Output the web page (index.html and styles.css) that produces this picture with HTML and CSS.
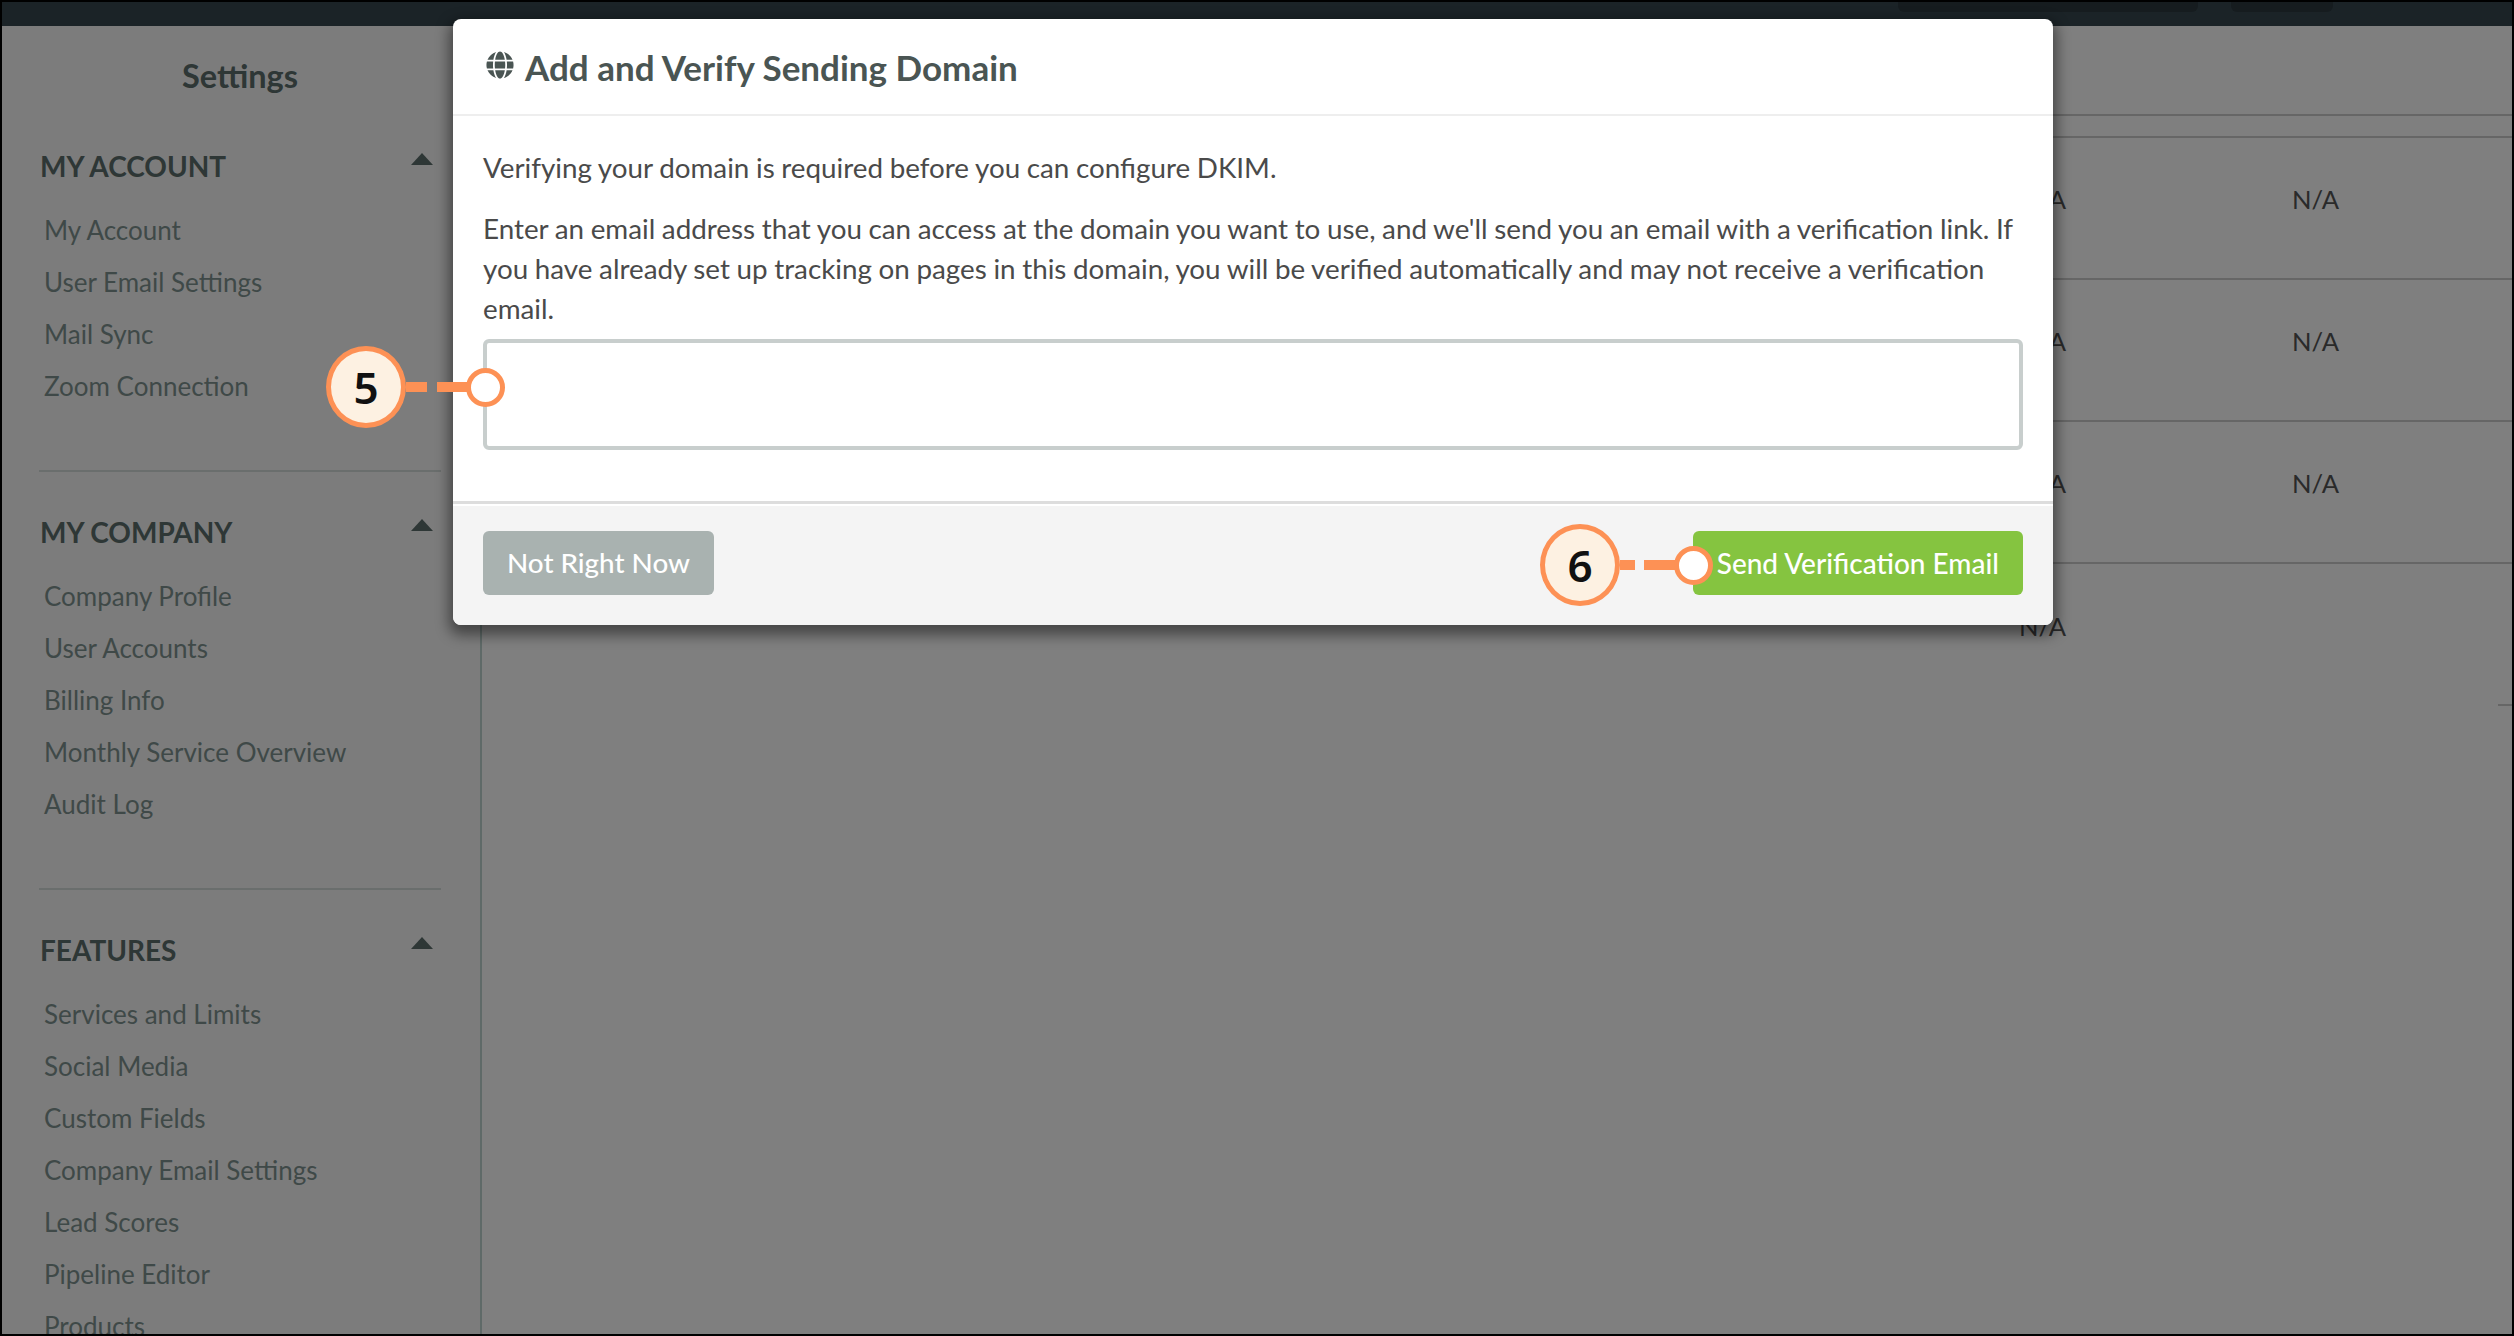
FILE: index.html
```html
<!DOCTYPE html>
<html lang="en">
<head>
    <meta charset="UTF-8">
    <title>Add and Verify Sending Domain</title>
    <link rel="stylesheet" href="styles.css">
</head>
<body>
    <div class="frame">
        <div class="topbar">
            <div class="topbar-tab topbar-tab-wide"></div>
            <div class="topbar-tab topbar-tab-small"></div>
        </div>

        <div class="page">
            <aside class="sidebar">
                <h2 class="sidebar-title">Settings</h2>

                <section class="side-section">
                    <div class="side-head"><span>MY ACCOUNT</span><i class="caret"></i></div>
                    <a class="side-link">My Account</a>
                    <a class="side-link">User Email Settings</a>
                    <a class="side-link">Mail Sync</a>
                    <a class="side-link">Zoom Connection</a>
                </section>

                <section class="side-section">
                    <div class="side-head"><span>MY COMPANY</span><i class="caret"></i></div>
                    <a class="side-link">Company Profile</a>
                    <a class="side-link">User Accounts</a>
                    <a class="side-link">Billing Info</a>
                    <a class="side-link">Monthly Service Overview</a>
                    <a class="side-link">Audit Log</a>
                </section>

                <section class="side-section">
                    <div class="side-head"><span>FEATURES</span><i class="caret"></i></div>
                    <a class="side-link">Services and Limits</a>
                    <a class="side-link">Social Media</a>
                    <a class="side-link">Custom Fields</a>
                    <a class="side-link">Company Email Settings</a>
                    <a class="side-link">Lead Scores</a>
                    <a class="side-link">Pipeline Editor</a>
                    <a class="side-link">Products</a>
                </section>
            </aside>

            <main class="content">
                <div class="row row-head"></div>
                <div class="row row-sub"></div>
                <div class="row"><span>N/A</span><span>N/A</span></div>
                <div class="row"><span>N/A</span><span>N/A</span></div>
                <div class="row"><span>N/A</span><span>N/A</span></div>
                <div class="row row-last"><span>N/A</span></div>
            </main>
        </div>

        <div class="backdrop"></div>

        <div class="modal">
            <div class="modal-header">
                <svg class="globe" viewBox="0 0 496 512"><path fill="currentColor" d="M336.5 160C322 70.7 287.8 8 248 8s-74 62.7-88.5 152h177zM152 256c0 22.2 1.2 43.5 3.3 64h185.3c2.1-20.5 3.3-41.8 3.3-64s-1.2-43.5-3.3-64H155.3c-2.1 20.5-3.3 41.8-3.3 64zm324.7-96c-28.6-67.9-86.5-120.4-158-141.6 24.4 33.8 41.2 84.7 50 141.6h108zM177.2 18.4C105.8 39.6 47.8 92.1 19.3 160h108c8.7-56.9 25.5-107.8 49.9-141.6zM487.4 192H372.7c2.1 21 3.3 42.5 3.3 64s-1.2 43-3.3 64h114.6c5.5-20.5 8.6-41.8 8.6-64s-3.1-43.5-8.5-64zM120 256c0-21.5 1.2-43 3.3-64H8.6C3.2 212.5 0 233.8 0 256s3.2 43.5 8.6 64h114.6c-2-21-3.2-42.5-3.2-64zm39.5 96c14.5 89.3 48.7 152 88.5 152s74-62.7 88.5-152h-177zm159.3 141.6c71.4-21.2 129.4-73.7 158-141.6h-108c-8.8 56.9-25.6 107.8-50 141.6zM19.3 352c28.6 67.9 86.5 120.4 158 141.6-24.4-33.8-41.2-84.7-50-141.6h-108z"/></svg>
                <h1 class="modal-title">Add and Verify Sending Domain</h1>
            </div>
            <div class="modal-body">
                <p class="modal-text">Verifying your domain is required before you can configure DKIM.</p>
                <p class="modal-text">Enter an email address that you can access at the domain you want to use, and we'll send you an email with a verification link. If you have already set up tracking on pages in this domain, you will be verified automatically and may not receive a verification email.</p>
                <input class="modal-input" type="text">
            </div>
            <div class="modal-footer">
                <button class="btn btn-muted">Not Right Now</button>
                <button class="btn btn-green">Send Verification Email</button>
            </div>
        </div>

        <div class="callout callout-five">
            <div class="callout-num">5</div>
            <div class="callout-dash callout-dash-a"></div>
            <div class="callout-dash callout-dash-b"></div>
            <div class="callout-dot"></div>
        </div>

        <div class="callout callout-six">
            <div class="callout-num">6</div>
            <div class="callout-dash callout-dash-c"></div>
            <div class="callout-dash callout-dash-d"></div>
            <div class="callout-dot"></div>
        </div>
    </div>
</body>
</html>
```

FILE: styles.css
```css
* {
    margin: 0;
    padding: 0;
    box-sizing: border-box;
}

body {
    font-family: Lato, "Open Sans", sans-serif;
    background: #000;
}

.frame {
    position: relative;
    width: 2514px;
    height: 1336px;
    border: 2px solid #000;
    background: #fff;
    overflow: hidden;
    display: flex;
    flex-direction: column;
}

.topbar {
    height: 24px;
    flex: none;
    background: #36464e;
    display: flex;
    gap: 33px;
    padding-left: 1896px;
}

.topbar-tab {
    height: 10px;
    background: #2c393f;
    border-radius: 0 0 6px 6px;
}

.topbar-tab-wide {
    width: 300px;
}

.topbar-tab-small {
    width: 102px;
}

.page {
    flex: 1;
    display: flex;
    min-height: 0;
}

/* sidebar */
.sidebar {
    width: 480px;
    flex: none;
    background: #f9f9f9;
    border-right: 2px solid #bed4d0;
    padding: 20px 39px 0 37px;
    overflow: hidden;
}

.sidebar-title {
    font-size: 32.5px;
    font-weight: 700;
    line-height: 60px;
    text-align: center;
    color: #5c6e6c;
    margin-bottom: 40px;
}

.side-section {
    display: flex;
    flex-direction: column;
    padding-bottom: 58px;
    margin-bottom: 40px;
    border-bottom: 2px solid #d5dcdb;
}

.side-head {
    display: flex;
    align-items: center;
    justify-content: space-between;
    height: 40px;
    margin-bottom: 18px;
    padding: 0 8px 0 1px;
    font-size: 28px;
    font-weight: 700;
    color: #5c6e6c;
}

.caret {
    width: 0;
    height: 0;
    margin-top: -14px;
    border-left: 11px solid transparent;
    border-right: 11px solid transparent;
    border-bottom: 12px solid #5c6e6c;
}

.side-link {
    display: block;
    height: 52px;
    line-height: 52px;
    padding-left: 5px;
    font-size: 26px;
    color: #7f9390;
    white-space: nowrap;
}

/* table behind the dialog */
.content {
    flex: 1;
    display: flex;
    flex-direction: column;
    min-width: 0;
}

.row {
    height: 142px;
    flex: none;
    display: grid;
    grid-template-columns: 1537px 273px;
    align-items: center;
    padding-bottom: 18px;
    border-bottom: 2px solid #ccc;
    font-size: 25.6px;
    color: #555;
}

.row span:nth-child(1) {
    grid-column: 2;
}

.row span:nth-child(2) {
    grid-column: 3;
}

.row-head {
    height: 90px;
}

.row-sub {
    height: 22px;
    padding-bottom: 0;
}

.row-last {
    border-bottom: none;
    position: relative;
}

.row-last::after {
    content: "";
    position: absolute;
    right: 0;
    bottom: 0;
    width: 14px;
    height: 2px;
    background: #ccc;
}

.backdrop {
    position: absolute;
    inset: 0;
    background: rgba(0, 0, 0, 0.5);
}

/* dialog */
.modal {
    position: absolute;
    left: 451px;
    top: 17px;
    width: 1600px;
    background: #fff;
    border-radius: 8px;
    box-shadow: 0 6px 14px 4px rgba(0, 0, 0, 0.45);
    overflow: hidden;
}

.modal-header {
    height: 97px;
    display: flex;
    align-items: center;
    gap: 11px;
    padding: 0 30px 0 33px;
    border-bottom: 2px solid #eee;
    color: #4a5553;
}

.globe {
    width: 28px;
    height: 28px;
    margin-top: -3px;
}

.modal-title {
    font-size: 35px;
    font-weight: 700;
}

.modal-body {
    padding: 32px 30px 51px;
}

.modal-text {
    font-size: 27.8px;
    line-height: 40px;
    word-spacing: -0.5px;
    color: #4a4a4a;
    margin-bottom: 21px;
}

.modal-text + .modal-text {
    margin-bottom: 18px;
}

.modal-input {
    display: block;
    width: 100%;
    height: 111px;
    margin-top: -8px;
    background: #fff;
    border: 4px solid #c8cecd;
    border-radius: 6px;
}

.modal-footer {
    height: 124px;
    display: flex;
    align-items: center;
    justify-content: space-between;
    padding: 0 30px 4px;
    background: #f4f4f4;
    border-top: 3px solid #ddd;
    box-shadow: inset 0 2px 0 #fff;
}

.btn {
    height: 64px;
    padding: 0 24px;
    border: none;
    border-radius: 6px;
    font-family: inherit;
    font-size: 27.8px;
    font-weight: 500;
    color: #fff;
}

.btn-muted {
    background: #a9b2b0;
}

.btn-green {
    background: #85c440;
    font-size: 28px;
}

/* numbered annotations on top of the shot */
.callout {
    position: absolute;
    display: flex;
    align-items: center;
}

.callout-five {
    left: 324px;
    top: 344px;
    height: 82px;
}

.callout-six {
    left: 1538px;
    top: 522px;
    height: 82px;
}

.callout-num {
    width: 80px;
    height: 82px;
    flex: none;
    display: flex;
    align-items: center;
    justify-content: center;
    border: 5px solid #fd9155;
    border-radius: 50%;
    background: #fdf1e2;
    font-family: "Noto Sans", sans-serif;
    font-size: 44px;
    font-weight: 600;
    color: #111;
}

.callout-dash {
    height: 10px;
    flex: none;
    background: #fd9155;
}

.callout-dash-a {
    width: 21px;
    margin-right: 10px;
}

.callout-dash-b {
    width: 30px;
}

.callout-dash-c {
    width: 15px;
    margin-right: 9px;
}

.callout-dash-d {
    width: 31px;
}

.callout-dot {
    width: 39px;
    height: 39px;
    flex: none;
    margin-left: -1px;
    border: 5px solid #fd9155;
    border-radius: 50%;
    background: #fff;
}
```
